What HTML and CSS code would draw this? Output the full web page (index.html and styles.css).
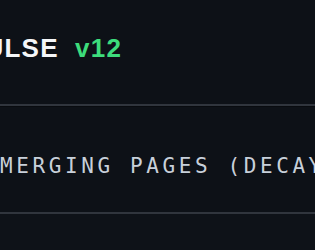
FILE: index.html
```html
<!DOCTYPE html>
<html lang="en">
<head>
    <meta charset="UTF-8">
    <meta name="viewport" content="width=device-width, initial-scale=1.0">
    <title>Pulse</title>
    <link rel="stylesheet" href="styles.css">
</head>
<body>
    <div class="app">
        <header class="app-header">
            <h1 class="brand">PULSE <span class="version">v12</span></h1>
        </header>

        <section class="status-row">
            <div class="status-label">MERGING PAGES (DECAY)</div>
        </section>

        <section class="next-row"></section>
    </div>
</body>
</html>
```

FILE: styles.css
```css
body {
    margin: 0;
    background-color: #0d1117;
    font-family: "Liberation Sans", Arial, sans-serif;
    overflow: hidden;
}

.app {
    margin-left: -34px;
    width: 420px;
}

.app-header {
    padding: 33px 0 41px;
    border-bottom: 2px solid #30353d;
}

.brand {
    margin: 0;
    font-size: 26px;
    line-height: 30px;
    font-weight: bold;
    letter-spacing: 1.2px;
    color: #f4f6f8;
    white-space: nowrap;
}

.version {
    margin-left: 8px;
    color: #3ddc7c;
}

.status-row {
    padding: 47px 0 33px 34px;
    border-top: 1px solid #080b0f;
    border-bottom: 2px solid #30353d;
}

.status-label {
    font-family: "DejaVu Sans Mono", monospace;
    font-size: 21px;
    line-height: 25px;
    letter-spacing: 3.6px;
    color: #c8d0da;
    white-space: nowrap;
}

.next-row {
    height: 40px;
    background-color: #0e1218;
}
```
